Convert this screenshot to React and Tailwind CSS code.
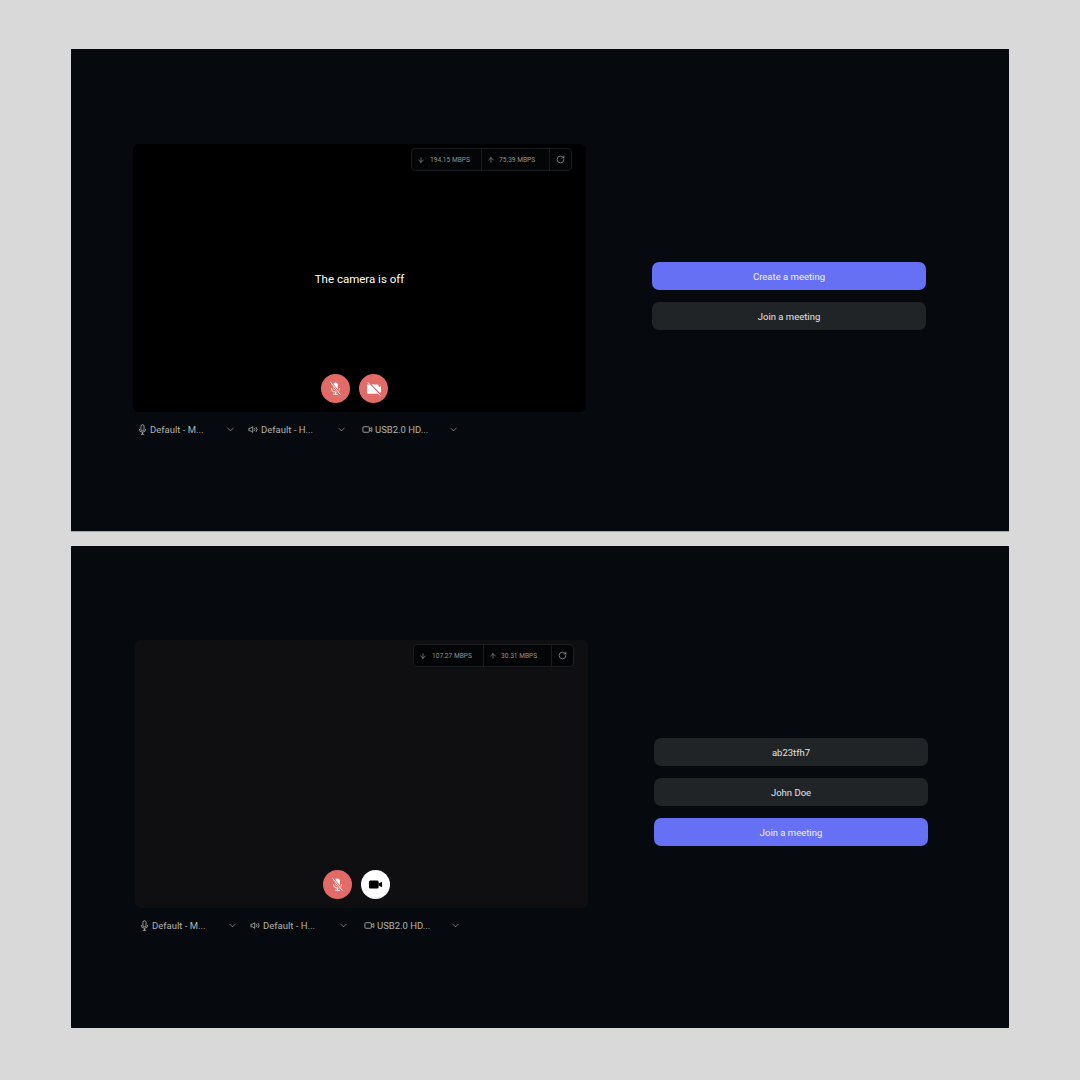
import React from "react";
import { ArrowDown, ArrowUp, RotateCw, ChevronDown } from "lucide-react";

function Stats({ down, up }) {
  return (
    <div className="absolute top-[4px] right-[14px] flex h-[23px] w-[161px] items-center rounded-[4px] border border-[#1a1c1f] bg-[#040506] text-[6.6px] text-[#93938f]">
      <div className="flex h-full w-[69px] items-center pl-[5px]">
        <ArrowDown size={8} strokeWidth={1.5} className="text-[#c0c0c0]" />
        <span className="ml-[5px] whitespace-nowrap pt-[2px]">{down} MBPS</span>
      </div>
      <div className="flex h-full w-[68px] items-center border-l border-[#1a1c1f] pl-[5px]">
        <ArrowUp size={8} strokeWidth={1.5} className="text-[#c0c0c0]" />
        <span className="ml-[4px] whitespace-nowrap pt-[2px]">{up} MBPS</span>
      </div>
      <div className="flex h-full flex-1 items-center justify-center border-l border-[#1a1c1f]">
        <RotateCw size={9} strokeWidth={1.5} className="text-[#c0c0c0]" />
      </div>
    </div>
  );
}

function MicLine() {
  return (
    <svg width="11" height="11" viewBox="0 0 12 12" fill="none" stroke="#a8a8a2" strokeWidth="1">
      <rect x="4.3" y="0.8" width="3.4" height="6.6" rx="1.7" />
      <path d="M2.6 5.6a3.4 3.4 0 0 0 6.8 0M6 9v2.2M4.2 11.2h3.6" />
    </svg>
  );
}

function SpeakerLine() {
  return (
    <svg width="11" height="11" viewBox="0 0 12 12" fill="none" stroke="#a8a8a2" strokeWidth="1">
      <path d="M1 4.6h1.8L5.2 3v6L2.8 7.4H1z" />
      <path d="M7 4.6a2 2 0 0 1 0 2.8M8.7 3.4a3.8 3.8 0 0 1 0 5.2" />
    </svg>
  );
}

function CamLine() {
  return (
    <svg width="11" height="11" viewBox="0 0 12 12" fill="none" stroke="#a8a8a2" strokeWidth="1">
      <rect x="1" y="3" width="7" height="6" rx="1" />
      <path d="M8 5.4l2.8-1.5v4.2L8 6.6" />
    </svg>
  );
}

function Selector({ icon, label, width, textWidth }) {
  return (
    <div className={`flex items-center ${width}`}>
      <div className="flex w-[13px] shrink-0 justify-start">{icon}</div>
      <span className={`${textWidth} whitespace-nowrap text-[9.5px] leading-none text-[#b4b2aa]`}>{label}</span>
      <ChevronDown size={11} strokeWidth={1.25} className="text-[#c0c0c0]" />
    </div>
  );
}

function Round({ children, white }) {
  return (
    <div className={`flex h-[29px] w-[29px] items-center justify-center rounded-full ${white ? "bg-white" : "bg-[#e26b67]"}`}>
      {children}
    </div>
  );
}

function MicMuted() {
  return (
    <svg width="15" height="15" viewBox="0 0 16 16">
      <rect x="5.5" y="1.5" width="5" height="8.5" rx="2.5" fill="#fff" />
      <path d="M3.6 7.4a4.4 4.4 0 0 0 8.8 0M8 12v2.2M5.6 14.2h4.8" fill="none" stroke="#fff" strokeWidth="1.1" />
      <path d="M2.8 1.4l10.4 13" stroke="#e26b67" strokeWidth="2.6" />
      <path d="M2.8 1.4l10.4 13" stroke="#fff" strokeWidth="1" />
    </svg>
  );
}

function FilmOff() {
  return (
    <svg width="16" height="16" viewBox="0 0 16 16">
      <path d="M1 3.5h2.5l8.6 9.2H2.2A1.2 1.2 0 0 1 1 11.5z" fill="#fff" />
      <path d="M5.6 3.5h5.9A1.2 1.2 0 0 1 12.7 4.7v1.6l2.3-1.2v6l-1.2.6z" fill="#fff" />
      <path d="M1.6 1.2l12.8 13.6" stroke="#fff" strokeWidth="1" />
    </svg>
  );
}

function FilmOn() {
  return (
    <svg width="15" height="15" viewBox="0 0 16 16">
      <rect x="1" y="3.8" width="10.4" height="8.4" rx="1.6" fill="#000" />
      <path d="M11.4 7l3.6-2v6l-3.6-2z" fill="#000" />
    </svg>
  );
}

function Preview({ dim, down, up, on, noText }) {
  return (
    <div className="w-[454px] shrink-0">
      <div className={`relative flex h-[268px] w-[453px] items-center justify-center rounded-[6px] ${dim ? "bg-[#0f0e11]" : "bg-black"}`}>
        <Stats down={down} up={up} />
        {!noText && <span className="mt-[3px] text-[11.5px] text-white">The camera is off</span>}
        <div className="absolute bottom-[9px] left-[188px] flex gap-[9px]">
          <Round><MicMuted /></Round>
          <Round white={on}>{on ? <FilmOn /> : <FilmOff />}</Round>
        </div>
      </div>
      <div className="mt-[11px] flex h-[13px] items-center pl-[4px]">
        <Selector icon={<MicLine />} label="Default - M..." width="w-[111px]" textWidth="w-[75px]" />
        <Selector icon={<SpeakerLine />} label="Default - H..." width="w-[114px]" textWidth="w-[75px]" />
        <Selector icon={<CamLine />} label="USB2.0 HD..." width="w-[112px]" textWidth="w-[73px]" />
      </div>
    </div>
  );
}

function Btn({ primary, children }) {
  return (
    <div className={`flex h-[28px] items-center justify-center rounded-[7px] pt-[2px] text-[9.5px] ${primary ? "bg-[#6570f5] text-[#f2f3ff]" : "bg-[#202427] text-[#e4e4e4]"}`}>
      {children}
    </div>
  );
}

export default function App() {
  return (
    <div className="flex min-h-[1080px] w-[1080px] flex-col gap-[14px] bg-[#d9d9d9] pl-[71px] pt-[49px] font-['Roboto','Open_Sans',sans-serif]">
      <div className="flex h-[483px] w-[938px] items-start border-b border-[#a6a6a8] bg-[#060a0f] pl-[62px] pt-[95px]">
        <Preview down="194.15" up="75.39" />
        <div className="ml-[65px] mt-[118px] flex w-[274px] flex-col gap-[12px]">
          <Btn primary>Create a meeting</Btn>
          <Btn>Join a meeting</Btn>
        </div>
      </div>
      <div className="flex h-[482px] w-[938px] items-start bg-[#060a0f] pl-[64px] pt-[94px]">
        <Preview dim down="107.27" up="30.31" on noText />
        <div className="ml-[65px] mt-[98px] flex w-[274px] flex-col gap-[12px]">
          <Btn>ab23tfh7</Btn>
          <Btn>John Doe</Btn>
          <Btn primary>Join a meeting</Btn>
        </div>
      </div>
    </div>
  );
}
